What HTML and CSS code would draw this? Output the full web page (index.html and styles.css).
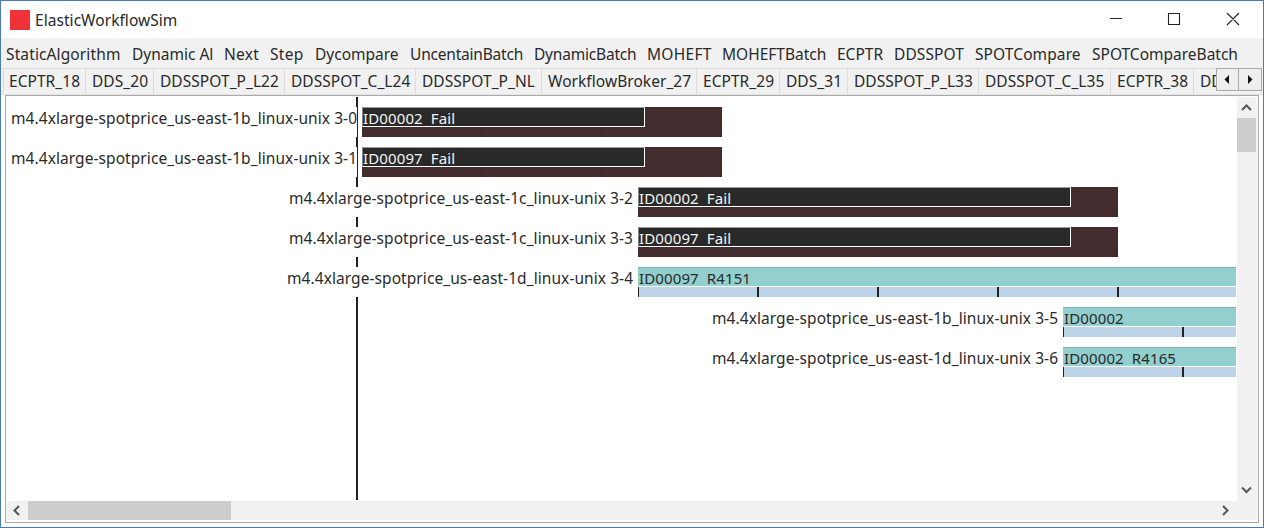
FILE: index.html
```html
<!DOCTYPE html>
<html lang="en">
<head>
<meta charset="utf-8">
<title>ElasticWorkflowSim</title>
<link rel="stylesheet" href="styles.css">
</head>
<body>
<div class="window">
  <header class="titlebar">
    <span class="app-icon"></span>
    <span class="title">ElasticWorkflowSim</span>
    <svg class="controls" width="140" height="20" viewBox="0 0 140 20"><path d="M10 9.500h12M68.500 4.500h11v11h-11zM127 4l12 12M139 4l-12 12" fill="none" stroke="#222" stroke-width="1.1"/></svg>
  </header>
  <nav class="menu"><span>StaticAlgorithm</span><span>Dynamic Al</span><span>Next</span><span>Step</span><span>Dycompare</span><span>UncentainBatch</span><span>DynamicBatch</span><span>MOHEFT</span><span>MOHEFTBatch</span><span>ECPTR</span><span>DDSSPOT</span><span>SPOTCompare</span><span>SPOTCompareBatch</span></nav>
  <div class="tabrow">
    <div class="tabs"><span>ECPTR_18</span><span>DDS_20</span><span>DDSSPOT_P_L22</span><span>DDSSPOT_C_L24</span><span>DDSSPOT_P_NL</span><span>WorkflowBroker_27</span><span>ECPTR_29</span><span>DDS_31</span><span>DDSSPOT_P_L33</span><span>DDSSPOT_C_L35</span><span>ECPTR_38</span><span>DDS_40</span></div>
    <div class="tab-btn"><svg width="21" height="20"><path d="M12 6v9l-4.500-4.500z" fill="#111"/></svg></div>
    <div class="tab-btn"><svg width="21" height="20"><path d="M9 6v9l4.500-4.500z" fill="#111"/></svg></div>
  </div>
  <main class="pane">
    <div class="view">
      <div class="chart">
        <div class="row at-b"><span class="label">m4.4xlarge-spotprice_us-east-1b_linux-unix 3-0</span><div class="bar failed short"><div class="task">ID00002&nbsp; Fail</div></div></div>
        <div class="row at-b"><span class="label">m4.4xlarge-spotprice_us-east-1b_linux-unix 3-1</span><div class="bar failed short"><div class="task">ID00097&nbsp; Fail</div></div></div>
        <div class="row at-c"><span class="label">m4.4xlarge-spotprice_us-east-1c_linux-unix 3-2</span><div class="bar failed long"><div class="task">ID00002&nbsp; Fail</div></div></div>
        <div class="row at-c"><span class="label">m4.4xlarge-spotprice_us-east-1c_linux-unix 3-3</span><div class="bar failed long"><div class="task">ID00097&nbsp; Fail</div></div></div>
        <div class="row at-d"><span class="label">m4.4xlarge-spotprice_us-east-1d_linux-unix 3-4</span><div class="bar running"><div class="task">ID00097&nbsp; R4151</div><div class="ticks"></div></div></div>
        <div class="row at-e"><span class="label">m4.4xlarge-spotprice_us-east-1b_linux-unix 3-5</span><div class="bar running"><div class="task">ID00002</div><div class="ticks"></div></div></div>
        <div class="row at-e"><span class="label">m4.4xlarge-spotprice_us-east-1d_linux-unix 3-6</span><div class="bar running"><div class="task">ID00002&nbsp; R4165</div><div class="ticks"></div></div></div>
      </div>
      <div class="vscroll">
        <svg width="19" height="21"><path d="M5 13l4.500-4.500 4.500 4.500" class="chev"/></svg>
        <div class="vthumb"></div>
        <svg class="end" width="19" height="21"><path d="M5 7.500l4.500 4.500 4.500-4.500" class="chev"/></svg>
      </div>
    </div>
    <div class="hscroll">
      <svg width="21" height="19"><path d="M12 5l-4.500 4.500 4.500 4.500" class="chev"/></svg>
      <div class="hthumb"></div>
      <svg class="hend" width="21" height="19"><path d="M7 5l4.500 4.500-4.500 4.500" class="chev"/></svg>
    </div>
  </main>
</div>
</body>
</html>
```
FILE: styles.css
```css
* { box-sizing: border-box; }
body { margin: 0; font-family: "Noto Sans", "Open Sans", sans-serif; font-size: 15.5px; color: #2a2a2a; }
svg { display: block; flex: none; }
.window { width: 1264px; height: 528px; display: flex; flex-direction: column; background: #fff; border: 1px solid #4a7db5; overflow: hidden; }
.titlebar { height: 37px; flex: none; display: flex; align-items: center; padding-left: 9px; }
.app-icon { width: 20px; height: 20px; background: #ee3237; }
.title { margin-left: 5px; letter-spacing: 0.05px; }
.controls { margin: 0 23px 1px auto; }

.menu { height: 30px; flex: none; display: flex; align-items: center; padding: 2px 0 0 5px; background: #f1f1f1; white-space: nowrap; }
.menu span { flex: none; }
.menu span:nth-child(1) { width: 126px; letter-spacing: 0.12px; }
.menu span:nth-child(2) { width: 92px; }
.menu span:nth-child(3) { width: 46px; letter-spacing: 0.3px; }
.menu span:nth-child(4) { width: 45px; letter-spacing: 0.3px; }
.menu span:nth-child(5) { width: 95px; }
.menu span:nth-child(6) { width: 124px; letter-spacing: -0.2px; }
.menu span:nth-child(7) { width: 113px; letter-spacing: -0.2px; }
.menu span:nth-child(8) { width: 75px; letter-spacing: 0.3px; }
.menu span:nth-child(9) { width: 115px; }
.menu span:nth-child(10) { width: 57px; }
.menu span:nth-child(11) { width: 81px; letter-spacing: 0.1px; }
.menu span:nth-child(12) { width: 117px; letter-spacing: 0.1px; }

.tabrow { height: 27px; flex: none; display: flex; padding: 0 1px 0 2px; background: #f1f1f1; border-bottom: 1px solid #e3e3e3; }
.tabs { flex: 1; min-width: 0; display: flex; overflow: hidden; border-top: 1px solid #dcdcdc; border-left: 1px solid #dcdcdc; }
.tabs span { flex: none; width: 131px; padding-left: 6px; height: 26px; line-height: 25px; border-right: 1px solid #dcdcdc; letter-spacing: 0.05px; white-space: nowrap; }
.tabs span:nth-child(1) { width: 82px; padding-left: 5px; }
.tabs span:nth-child(2), .tabs span:nth-child(8) { width: 68px; }
.tabs span:nth-child(5) { width: 126px; }
.tabs span:nth-child(6) { width: 155px; }
.tabs span:nth-child(7) { width: 83px; }
.tabs span:nth-child(10) { width: 132px; }
.tabs span:nth-child(11) { width: 83px; }
.tab-btn { width: 23px; height: 23px; border: 1px solid #a9a9a9; background: #eee; }
.tab-btn + .tab-btn { border-left: 0; }

.pane { width: 1254px; height: 428px; margin-left: 4px; flex: none; border: 1px solid #a9a9a9; border-left-color: #b5a59d; border-bottom-color: #b5a59d; padding: 1px 1px 2px 1px; display: flex; flex-direction: column; }
.view { flex: 1; min-height: 0; display: flex; }
.chart { width: 1229px; height: 403px; flex: none; padding-top: 10px; background: linear-gradient(#222, #222) 349px 0 / 2px 403px no-repeat; }
.row { display: flex; height: 30px; margin-bottom: 10px; }
.label { flex: none; margin-right: 5px; height: 30px; line-height: 22px; letter-spacing: 0.07px; background: #fff; white-space: nowrap; }
.at-b { padding-left: 4px; } .at-b .label { width: 346px; }
.at-c { padding-left: 282px; } .at-c .label { width: 344px; }
.at-d { padding-left: 280px; } .at-d .label { width: 346px; }
.at-e { padding-left: 705px; } .at-e .label { width: 346px; }
.bar { height: 30px; flex: none; }
.task { height: 20px; border: 1px solid #fff; border-top-color: #999; border-left-color: #888; line-height: 21px; font-size: 15px; letter-spacing: 0.12px; white-space: nowrap; }
.failed { background: repeating-linear-gradient(90deg, transparent 0 119px, #39292a 119px 120px) 0 100% / 100% 10px no-repeat #432c2d; }
.failed .task { background: #292929; color: #f4f4f4; }
.short { width: 360px; } .short .task { width: 283px; }
.long { width: 480px; } .long .task { width: 433px; }
.running { flex: 1; }
.running .task { background: #92cfce; border-width: 1px 0; padding-left: 1px; border-top-color: #87aeb0; }
.ticks { height: 10px; border-left: 1px solid #222; background: repeating-linear-gradient(90deg, #bbd2e7 0 118px, #222 118px 120px); }

.vscroll { width: 20px; margin-left: 1px; background: #f1f1f1; display: flex; flex-direction: column; }
.vthumb { width: 19px; height: 34px; background: #cdcdcd; }
.end { margin-top: auto; }
.hscroll { height: 19px; background: #f1f1f1; display: flex; flex: none; }
.hthumb { width: 203px; height: 19px; background: #cdcdcd; }
.hend { margin-left: auto; margin-right: 20px; }
.chev { fill: none; stroke: #555; stroke-width: 2; }
```
